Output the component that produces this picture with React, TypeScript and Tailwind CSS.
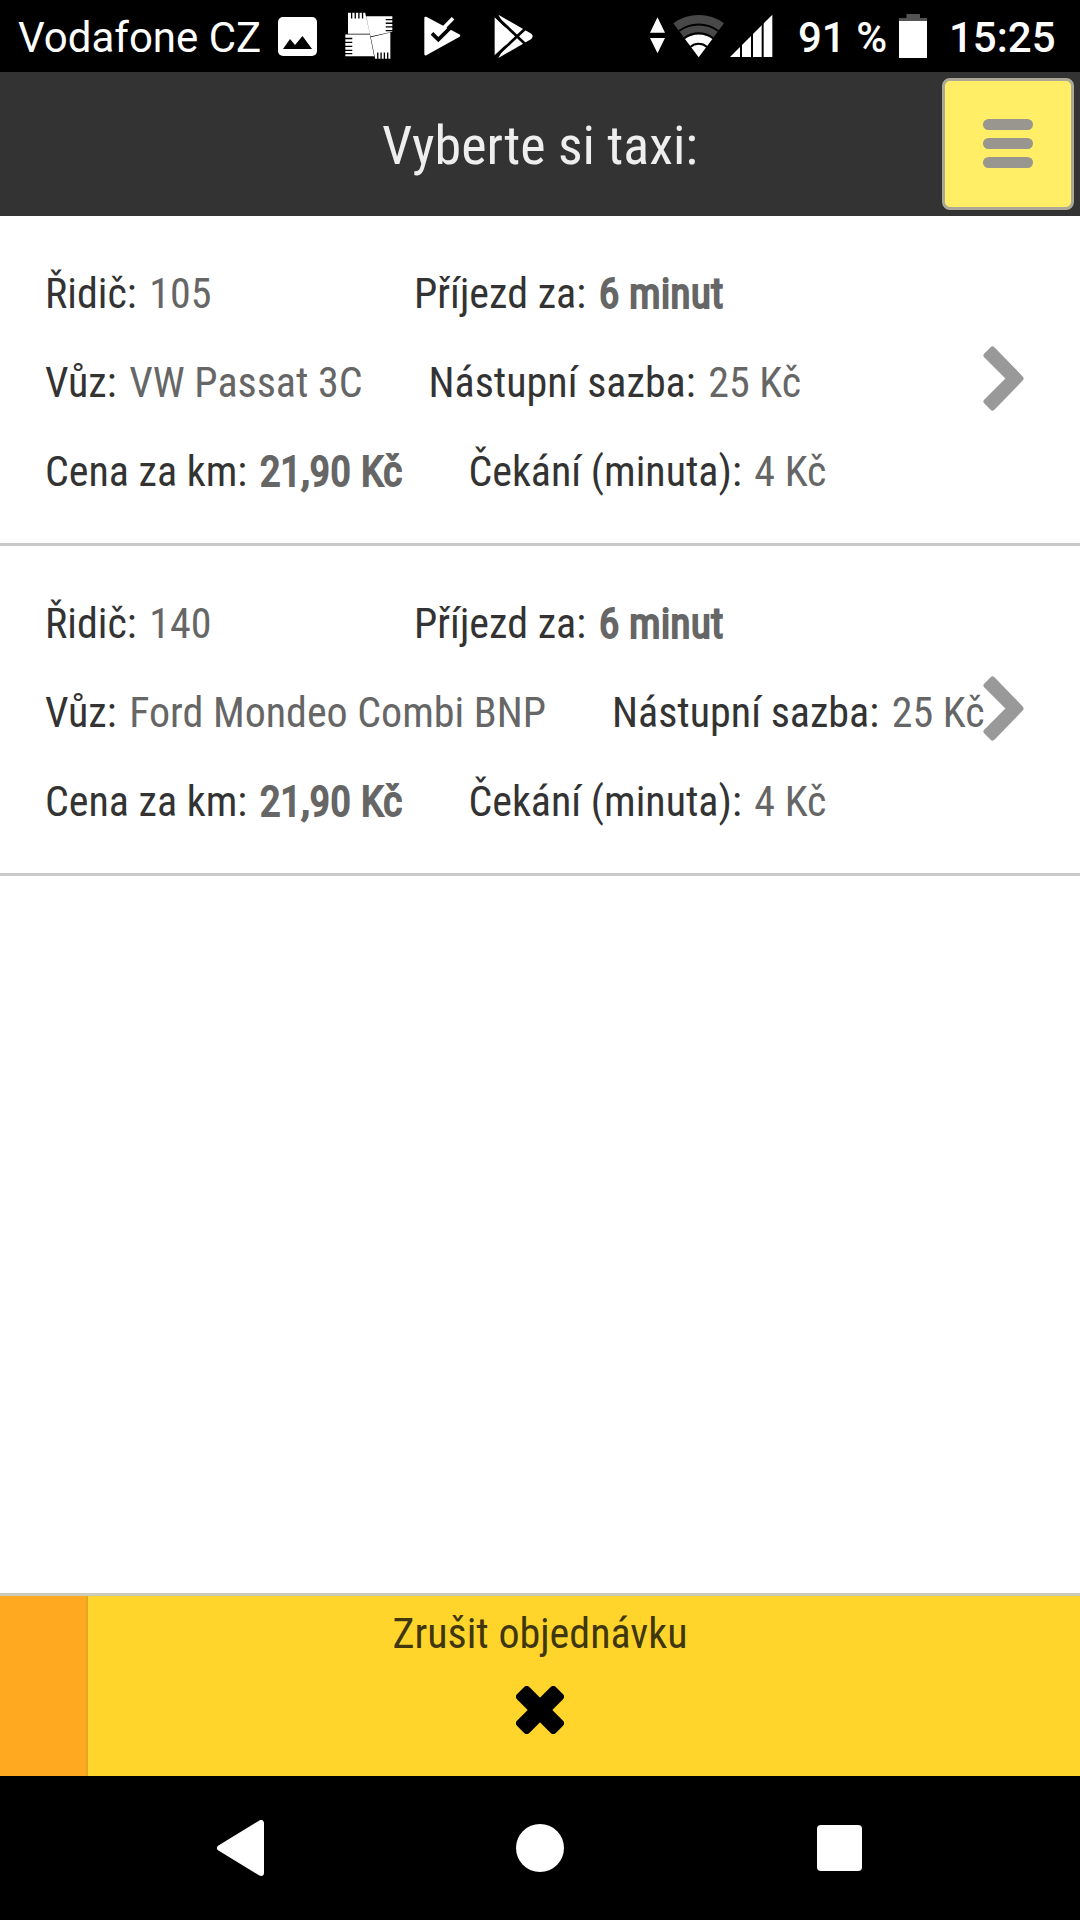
import type { ReactNode } from 'react';

const taxis = [
    { driver: '105', car: 'VW Passat 3C', arrival: '6 minut', boarding: '25 Kč', perKm: '21,90 Kč', waiting: '4 Kč' },
    { driver: '140', car: 'Ford Mondeo Combi BNP', arrival: '6 minut', boarding: '25 Kč', perKm: '21,90 Kč', waiting: '4 Kč' },
];

function StatusBar() {
    return (
        <div className="flex h-[72px] w-full shrink-0 items-center bg-black font-[Roboto,sans-serif] text-[42px] leading-[72px] text-white">
            <span className="ml-[18px] w-[260px] whitespace-nowrap pt-[4px]">Vodafone CZ</span>

            {/* Picture */}
            <svg className="h-[39px] w-[39px]" viewBox="0 0 39 39">
                <rect width="39" height="39" rx="5" fill="#fff" />
                <path d="M5 32 L12 22 L17 28 L24.500 19 L34 32 Z" fill="#000" />
            </svg>

            {/* Pinwheel */}
            <svg className="ml-[28px] h-[48px] w-[48px]" viewBox="225 24 145 145">
                <path d="M234 26 H286 L300 90 H234 Z M289 37 H368 V84 L302 98 Z M303 100 L362 86 V165 H316 Z M226 92 H300 L313 158 H226 Z" fill="#fff" />
                <path
                    d="M245 24 V44 M256 24 V44 M267 24 V44 M278 24 V44 M348 47 H370 M348 58 H370 M348 69 H370 M348 80 H370 M324 146 V168 M334 146 V168 M344 146 V168 M354 146 V168 M224 104 H247 M224 116 H247 M224 128 H247 M224 140 H247 M224 150 H247"
                    stroke="#000"
                    strokeWidth="4"
                />
            </svg>

            {/* Play with check mark */}
            <svg className="ml-[31px] h-[40px] w-[37px]" viewBox="41 36 111 120">
                <path d="M46 42 L146 95 L46 150 Z" fill="#fff" stroke="#fff" strokeWidth="8" strokeLinejoin="round" />
                <path d="M104 62 L140 30 L152 78 L122 76 Z" fill="#000" />
                <path d="M65 88 L84 107 L124 67" fill="none" stroke="#000" strokeWidth="11" />
                <path d="M85 87 L128 43" stroke="#fff" strokeWidth="11" />
            </svg>

            {/* Play */}
            <svg className="ml-[33px] h-[45px] w-[40px]" viewBox="250 28 120 135">
                <path d="M252 38 L312 95 L252 152 Z M263 30 L362 87 Q370 95 362 103 L263 160 L300 95 Z" fill="#fff" />
                <path d="M248 28 L350 124 M248 162 L350 66" stroke="#000" strokeWidth="8" />
            </svg>

            {/* Data arrows, wifi and signal */}
            <svg className="ml-[116px] h-[44px] w-[123px]" viewBox="90 42 369 132">
                <path d="M112.500 52 L135 98 H90 Z M90 114 H135 L112.500 160 Z" fill="#fff" />
                <path d="M236 172 L160 70 A127 127 0 0 1 312 70 Z" fill="#484848" />
                <path d="M236 172 L195 117 A68 68 0 0 1 277 117 Z" fill="#fff" />
                <path d="M177 93 A98 98 0 0 1 295 93 M193 114 A71 71 0 0 1 279 114 M211 141 A38 38 0 0 1 261 141" fill="none" stroke="#000" strokeWidth="6" />
                <path d="M330 171 L457 44 V171 Z" fill="#fff" />
                <path d="M363 110 V172 M396 80 V172 M428 50 V172" stroke="#000" strokeWidth="6" />
            </svg>

            <span className="ml-[25px] w-[89px] whitespace-nowrap pt-[4px] font-medium">91 %</span>

            <svg className="ml-[12px] h-[44px] w-[28px]" viewBox="0 0 28 44">
                <path d="M7.500 0 H21 V4 H28 V8 H0 V4 H7.500 Z" fill="#545454" />
                <rect y="7" width="28" height="37" fill="#fff" />
            </svg>

            <span className="ml-[22px] whitespace-nowrap pt-[4px] font-medium">15:25</span>
        </div>
    );
}

function Field({ label, strong, wide, children }: { label: string; strong?: boolean; wide?: boolean; children: ReactNode }) {
    return (
        <div className={wide ? 'w-[369px]' : 'pr-[66px]'}>
            <span className="mr-[3px] text-[#333333]">{label}: </span>
            <span className={strong ? 'text-[#666666] [-webkit-text-stroke:1.8px_#666666]' : 'text-[#666666]'}>{children}</span>
        </div>
    );
}

function TaxiRow({ taxi }: { taxi: (typeof taxis)[number] }) {
    return (
        <div className="relative h-[330px] border-b-[3px] border-[#c9c9c9] pt-[33px] pl-[45px] text-[42px] leading-[89px] whitespace-nowrap">
            <div className="flex">
                <Field label="Řidič" wide>{taxi.driver}</Field>
                <Field label="Příjezd za" strong>{taxi.arrival}</Field>
            </div>
            <div className="flex">
                <Field label="Vůz">{taxi.car}</Field>
                <Field label="Nástupní sazba">{taxi.boarding}</Field>
            </div>
            <div className="flex">
                <Field label="Cena za km" strong>{taxi.perKm}</Field>
                <Field label="Čekání (minuta)">{taxi.waiting}</Field>
            </div>

            {/* The arrow may overlap long rows */}
            <svg className="absolute top-[130px] right-[56px] h-[65px] w-[41px]" viewBox="0 0 41 65">
                <path d="M9.500 3.500 L37.500 32.500 L9.500 61.500 L3.500 55.500 L26.500 32.500 L3.500 9.500 Z" fill="#999" stroke="#999" strokeWidth="6" strokeLinejoin="round" />
            </svg>
        </div>
    );
}

export default function App() {
    return (
        <div className="flex h-[1920px] w-[1080px] flex-col overflow-hidden bg-white font-['Roboto_Condensed',Roboto,sans-serif]">
            <StatusBar />

            <header className="relative flex h-[144px] shrink-0 items-center justify-center bg-[#333333]">
                <h1 className="pt-[3px] text-[54px] leading-none text-[#eeeeee]">Vyberte si taxi:</h1>
                <button className="absolute top-[6px] right-[6px] flex h-[132px] w-[132px] flex-col items-center justify-center gap-[8px] rounded-[8px] border-[3px] border-[#aca899] bg-[#ffee66] pb-[1px]">
                    <span className="h-[11px] w-[50px] rounded-full bg-[#999690]" />
                    <span className="h-[11px] w-[50px] rounded-full bg-[#999690]" />
                    <span className="h-[11px] w-[50px] rounded-full bg-[#999690]" />
                </button>
            </header>

            <main className="flex-1">
                {taxis.map((taxi) => (
                    <TaxiRow key={taxi.driver} taxi={taxi} />
                ))}
            </main>

            <footer className="relative flex h-[183px] shrink-0 flex-col items-center border-t-[3px] border-[#cccab8] bg-[#ffd52b]">
                <div className="absolute top-0 left-0 h-full w-[88px] border-r-2 border-[#e0a824] bg-[#ffa920]" />
                <span className="mt-[13px] text-[42px] leading-[50px] text-[#40370f]">Zrušit objednávku</span>
                <svg className="mt-[27px] h-[48px] w-[48px]" viewBox="-24 -24 48 48">
                    <rect x="-27.500" y="-8.750" width="55" height="17.500" rx="4" transform="rotate(45)" />
                    <rect x="-27.500" y="-8.750" width="55" height="17.500" rx="4" transform="rotate(-45)" />
                </svg>
            </footer>

            {/* System navigation */}
            <nav className="flex h-[144px] shrink-0 items-center bg-black">
                <svg className="ml-[216px] h-[56px] w-[48px]" viewBox="0 0 48 56">
                    <path d="M4 28 L45 3 V53 Z" fill="#fff" stroke="#fff" strokeWidth="6" strokeLinejoin="round" />
                </svg>
                <span className="ml-[252px] h-[48px] w-[48px] rounded-full bg-white" />
                <span className="ml-[253px] h-[46px] w-[45px] rounded-[4px] bg-white" />
            </nav>
        </div>
    );
}
